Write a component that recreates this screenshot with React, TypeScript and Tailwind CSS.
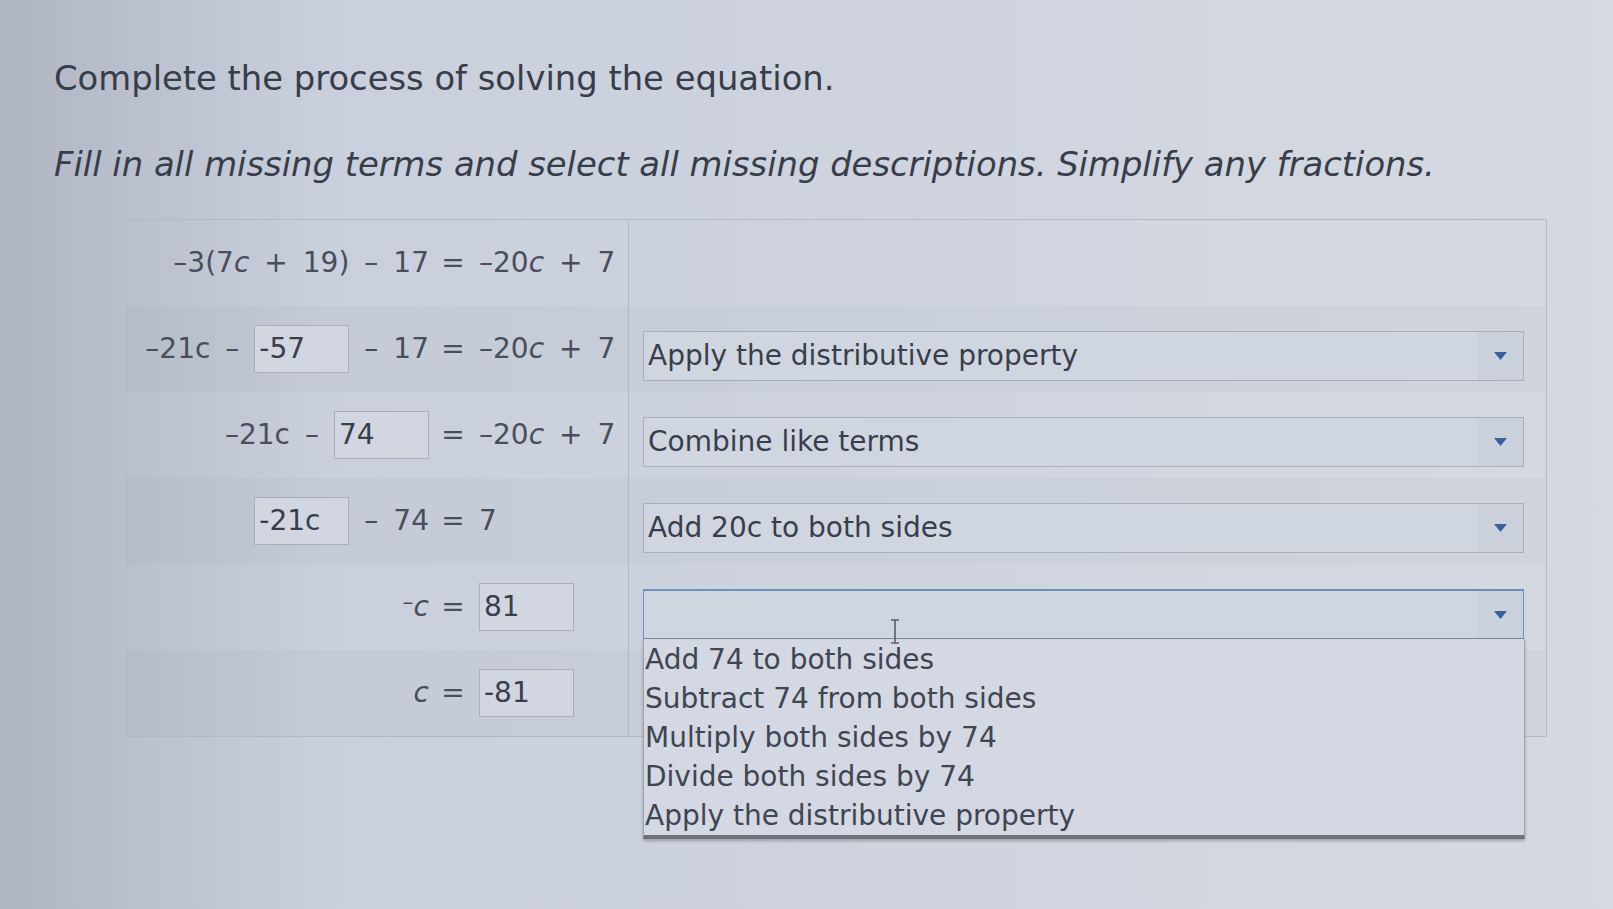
import React from "react";

type Row = {
  lhs: React.ReactNode;
  rhs: React.ReactNode;
  step?: string;
  open?: boolean;
};

const options = [
  "Add 74 to both sides",
  "Subtract 74 from both sides",
  "Multiply both sides by 74",
  "Divide both sides by 74",
  "Apply the distributive property",
];

function Op({ children }: { children: React.ReactNode }) {
  return <span className="mx-[15px]">{children}</span>;
}

function C() {
  return <span className="italic">c</span>;
}

function Box({ value }: { value: string }) {
  return (
    <span className="inline-flex h-[48px] w-[95px] items-center border border-[#a9afbb] bg-[#d1d6e0] pl-[4px] text-[#383e4b]">
      {value}
    </span>
  );
}

function Caret() {
  return (
    <svg width="15" height="10" viewBox="0 0 15 10">
      <path d="M1 1h13L7.5 9z" fill="#33629f" />
    </svg>
  );
}

function StepSelect({ value, open }: { value?: string; open?: boolean }) {
  return (
    <div className="relative">
      <div
        className={`flex h-[50px] items-stretch border ${
          open ? "border-[#6c8fc2] border-t-2 border-b-[#7d8898]" : "border-[#a9afbb]"
        } bg-[#d0d6e0]`}
      >
        <div className="flex flex-1 items-center pl-[4px] text-[28px] text-[#383e4b]">{value}</div>
        <div className="flex w-[46px] items-center justify-center bg-[#cbd1db]">
          <Caret />
        </div>
      </div>
      {open && (
        <div className="absolute left-0 right-[-1px] top-full z-10 border-x border-b-4 border-x-[#9ea4ae] border-b-[#6c717a] bg-[#d3d8e2] pt-[1px] shadow-[0_2px_3px_rgba(0,0,0,0.25)]">
          {options.map((o) => (
            <div key={o} className="h-[39px] pl-[1px] text-[28px] leading-[39px] text-[#3f4551]">
              {o}
            </div>
          ))}
          {/* text cursor */}
          <svg className="absolute left-[246px] top-[-20px]" width="10" height="25" viewBox="0 0 10 25">
            <path d="M1 1h8M5 1v23M1 24h8" stroke="#5a606b" strokeWidth="1.6" fill="none" />
          </svg>
        </div>
      )}
    </div>
  );
}

const rows: Row[] = [
  {
    lhs: (
      <>
        –3(7<C />
        <Op>+</Op>19)<Op>–</Op>17
      </>
    ),
    rhs: (
      <>
        –20<C />
        <Op>+</Op>7
      </>
    ),
  },
  {
    lhs: (
      <>
        –21c<Op>–</Op>
        <Box value="-57" />
        <Op>–</Op>17
      </>
    ),
    rhs: (
      <>
        –20<C />
        <Op>+</Op>7
      </>
    ),
    step: "Apply the distributive property",
  },
  {
    lhs: (
      <>
        –21c<Op>–</Op>
        <Box value="74" />
      </>
    ),
    rhs: (
      <>
        –20<C />
        <Op>+</Op>7
      </>
    ),
    step: "Combine like terms",
  },
  {
    lhs: (
      <>
        <Box value="-21c" />
        <Op>–</Op>74
      </>
    ),
    rhs: <>7</>,
    step: "Add 20c to both sides",
  },
  {
    lhs: (
      <>
        <span className="relative top-[-6px] text-[22px]">–</span>
        <C />
      </>
    ),
    rhs: <Box value="81" />,
    step: "",
    open: true,
  },
  {
    lhs: <C />,
    rhs: <Box value="-81" />,
  },
];

export default function App() {
  return (
    <div className="relative min-h-screen w-full overflow-hidden bg-linear-to-r from-[#b0b5c4] via-[#c9cfdc] via-20% to-[#d5dae1] font-['DejaVu_Sans',Verdana,sans-serif] text-[#383d4a]">
      <div className="pl-[54px] pt-[59px]">
        <h1 className="text-[33.8px] leading-[40px]">Complete the process of solving the equation.</h1>
        <p className="mt-[46px] text-[33.8px] italic leading-[40px]">
          Fill in all missing terms and select all missing descriptions. Simplify any fractions.
        </p>

        <div className="ml-[72px] mt-[34px] w-[1421px] border border-[#b3b9c4]">
          {rows.map((r, i) => (
            <div
              key={i}
              className={`grid h-[86px] grid-cols-[502px_1fr] ${i % 2 === 1 ? "bg-slate-900/[0.025]" : ""}`}
            >
              <div className="grid grid-cols-[314px_24px_1fr] items-center border-r border-[#b3b9c4] text-[28px] text-[#494e5a]">
                <div className="flex items-center justify-end pr-[12px] whitespace-nowrap">{r.lhs}</div>
                <div className="text-center">=</div>
                <div className="flex items-center pl-[14px] whitespace-nowrap">{r.rhs}</div>
              </div>
              <div className="flex flex-col justify-center pl-[14px] pr-[22px] pt-[14px]">
                {r.step !== undefined && <StepSelect value={r.step} open={r.open} />}
              </div>
            </div>
          ))}
        </div>
      </div>
    </div>
  );
}
